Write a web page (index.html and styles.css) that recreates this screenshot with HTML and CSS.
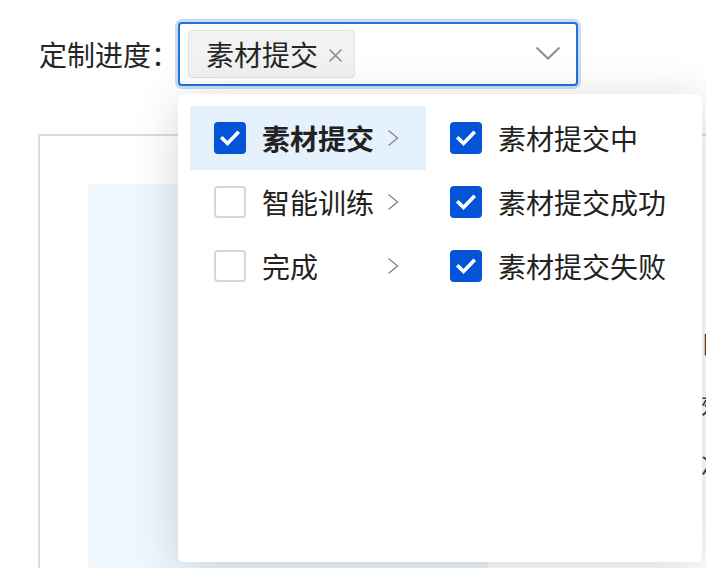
FILE: index.html
```html
<!DOCTYPE html>
<html lang="zh-CN">
<head>
<meta charset="utf-8">
<title>定制进度</title>
<link rel="stylesheet" href="styles.css">
</head>
<body>
<div class="page">
  <div class="form-row">
    <label class="label">定制进度：</label>
    <div class="select-wrap">
      <div class="select">
        <span class="tag">素材提交
          <svg class="tag-close" width="15" height="15" viewBox="0 0 15 15"><path d="M1.5 1.5L13.5 13.5M13.5 1.5L1.5 13.5" stroke="#8c8c8c" stroke-width="1.6" fill="none"/></svg>
        </span>
        <svg class="chevron" width="26" height="14" viewBox="0 0 26 14"><path d="M1.5 1.5L13 12.5L24.5 1.5" stroke="#8a8f99" stroke-width="2" fill="none"/></svg>
      </div>
      <div class="dropdown">
        <ul class="menu menu-first">
          <li class="item active">
            <span class="cb checked"><svg width="32" height="32" viewBox="0 0 32 32"><path d="M8.5 16.5L13.5 21.5L23.5 11" stroke="#fff" stroke-width="3.6" fill="none" stroke-linecap="square"/></svg></span>
            <span class="text">素材提交</span>
            <svg class="arrow" width="12" height="18" viewBox="0 0 12 18"><path d="M1.5 1.5L10.5 9L1.5 16.5" stroke="#8c8c8c" stroke-width="1.5" fill="none"/></svg>
          </li>
          <li class="item">
            <span class="cb"></span>
            <span class="text">智能训练</span>
            <svg class="arrow" width="12" height="18" viewBox="0 0 12 18"><path d="M1.5 1.5L10.5 9L1.5 16.5" stroke="#8c8c8c" stroke-width="1.5" fill="none"/></svg>
          </li>
          <li class="item">
            <span class="cb"></span>
            <span class="text">完成</span>
            <svg class="arrow" width="12" height="18" viewBox="0 0 12 18"><path d="M1.5 1.5L10.5 9L1.5 16.5" stroke="#8c8c8c" stroke-width="1.5" fill="none"/></svg>
          </li>
        </ul>
        <ul class="menu menu-second">
          <li class="item">
            <span class="cb checked"><svg width="32" height="32" viewBox="0 0 32 32"><path d="M8.5 16.5L13.5 21.5L23.5 11" stroke="#fff" stroke-width="3.6" fill="none" stroke-linecap="square"/></svg></span>
            <span class="text">素材提交中</span>
          </li>
          <li class="item">
            <span class="cb checked"><svg width="32" height="32" viewBox="0 0 32 32"><path d="M8.5 16.5L13.5 21.5L23.5 11" stroke="#fff" stroke-width="3.6" fill="none" stroke-linecap="square"/></svg></span>
            <span class="text">素材提交成功</span>
          </li>
          <li class="item">
            <span class="cb checked"><svg width="32" height="32" viewBox="0 0 32 32"><path d="M8.5 16.5L13.5 21.5L23.5 11" stroke="#fff" stroke-width="3.6" fill="none" stroke-linecap="square"/></svg></span>
            <span class="text">素材提交失败</span>
          </li>
        </ul>
      </div>
    </div>
  </div>
  <div class="box">
    <div class="panel"></div>
    <div class="side">
      <div class="side-line">目标任务</div>
      <div class="side-line">效果评估</div>
      <div class="side-line">次数统计</div>
    </div>
  </div>
</div>
</body>
</html>
```

FILE: styles.css
```css
html, body {
  margin: 0;
  padding: 0;
  background: #fff;
  overflow: hidden;
}
body {
  width: 706px;
  height: 568px;
  font-family: "Noto Sans CJK SC", "Noto Sans", sans-serif;
  color: #222;
}
ul { list-style: none; margin: 0; padding: 0; }

.page {
  padding: 22px 0 0 38px;
}
.form-row {
  display: flex;
  align-items: center;
  height: 64px;
}
.label {
  width: 140px;
  padding-left: 1px;
  box-sizing: border-box;
  font-size: 28px;
  line-height: 32px;
  white-space: nowrap;
  color: #262626;
}
.select-wrap {
  position: relative;
}
.select {
  box-sizing: border-box;
  width: 400px;
  height: 64px;
  border: 2px solid #1a73e0;
  border-radius: 4px;
  box-shadow: 0 0 0 3px #cadcf4;
  display: flex;
  align-items: center;
  padding-left: 8px;
  padding-right: 15px;
  background: #fff;
}
.tag {
  box-sizing: border-box;
  height: 48px;
  display: flex;
  align-items: center;
  padding: 0 11px 0 17px;
  background: #f2f2f2;
  border: 1px solid #e2e2e2;
  border-radius: 4px;
  font-size: 28px;
  color: #262626;
}
.tag-close {
  margin-left: 10px;
  margin-top: 2px;
}
.chevron {
  margin-left: auto;
  margin-top: -2px;
}

.dropdown {
  position: absolute;
  top: 72px;
  left: 0;
  width: 524px;
  height: 468px;
  box-sizing: border-box;
  background: #fff;
  border-radius: 6px;
  box-shadow: 0 6px 48px rgba(0, 0, 0, 0.16);
  padding: 12px;
  display: flex;
  z-index: 10;
}
.menu-first {
  width: 236px;
  flex: none;
}
.menu-second {
  flex: 1;
  min-width: 0;
}
.item {
  height: 64px;
  display: flex;
  align-items: center;
  padding-left: 24px;
  padding-right: 27px;
  font-size: 28px;
  color: #222;
}
.item.active {
  background: #e5f2fd;
}
.item.active .text {
  font-weight: 700;
}
.cb {
  box-sizing: border-box;
  width: 32px;
  height: 32px;
  border: 2px solid #d6d6d6;
  border-radius: 4px;
  background: #fff;
  flex: none;
  display: flex;
}
.cb.checked {
  border: none;
  background: #0454d8;
}
.text {
  margin-left: 16px;
  line-height: 32px;
  white-space: nowrap;
}
.arrow {
  margin-left: auto;
  flex: none;
}

.box {
  margin-top: 48px;
  width: 720px;
  height: 480px;
  border: 2px solid #dcdcdc;
  border-right: none;
  box-sizing: border-box;
  display: flex;
  padding: 48px 0 0 48px;
}
.panel {
  width: 400px;
  height: 420px;
  background: #eef6fe;
  flex: none;
}
.side {
  margin-left: 213px;
  padding-top: 128px;
  display: flex;
  flex-direction: column;
}
.side-line {
  height: 61px;
  font-size: 24px;
  line-height: 61px;
  color: #3a3f4a;
  white-space: nowrap;
}
```
